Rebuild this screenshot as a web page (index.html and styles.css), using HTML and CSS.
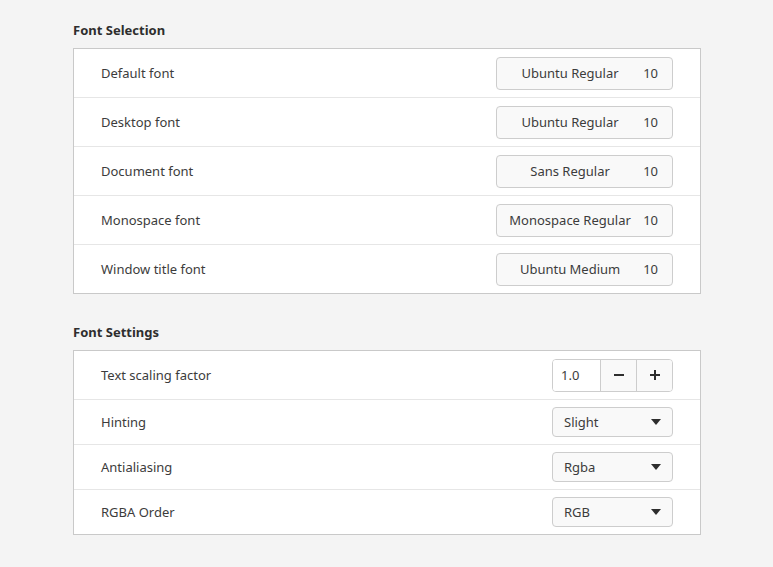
FILE: index.html
```html
<!DOCTYPE html>
<html>
<head>
<meta charset="utf-8">
<link rel="stylesheet" href="styles.css">
</head>
<body>
<main class="page">
  <section class="section">
    <h2 class="title">Font Selection</h2>
    <div class="list">
      <div class="row">
        <span class="label">Default font</span>
        <button class="fontbtn"><span class="fname">Ubuntu Regular</span><span class="fsize">10</span></button>
      </div>
      <div class="row">
        <span class="label">Desktop font</span>
        <button class="fontbtn"><span class="fname">Ubuntu Regular</span><span class="fsize">10</span></button>
      </div>
      <div class="row">
        <span class="label">Document font</span>
        <button class="fontbtn"><span class="fname">Sans Regular</span><span class="fsize">10</span></button>
      </div>
      <div class="row">
        <span class="label">Monospace font</span>
        <button class="fontbtn"><span class="fname">Monospace Regular</span><span class="fsize">10</span></button>
      </div>
      <div class="row">
        <span class="label">Window title font</span>
        <button class="fontbtn"><span class="fname">Ubuntu Medium</span><span class="fsize">10</span></button>
      </div>
    </div>
  </section>
  <section class="section second">
    <h2 class="title">Font Settings</h2>
    <div class="list">
      <div class="row">
        <span class="label">Text scaling factor</span>
        <div class="spin">
          <span class="spin-value">1.0</span>
          <button class="spin-btn"><svg width="12" height="12" viewBox="0 0 12 12"><rect x="1" y="5" width="10" height="2" fill="#2e2e2e"/></svg></button>
          <button class="spin-btn"><svg width="12" height="12" viewBox="0 0 12 12"><rect x="1" y="5" width="10" height="2" fill="#2e2e2e"/><rect x="5" y="1" width="2" height="10" fill="#2e2e2e"/></svg></button>
        </div>
      </div>
      <div class="row short">
        <span class="label">Hinting</span>
        <button class="combo"><span>Slight</span><svg width="10" height="6" viewBox="0 0 10 6"><path d="M0 0h10L5 6z" fill="#2e2e2e"/></svg></button>
      </div>
      <div class="row short">
        <span class="label">Antialiasing</span>
        <button class="combo"><span>Rgba</span><svg width="10" height="6" viewBox="0 0 10 6"><path d="M0 0h10L5 6z" fill="#2e2e2e"/></svg></button>
      </div>
      <div class="row short">
        <span class="label">RGBA Order</span>
        <button class="combo"><span>RGB</span><svg width="10" height="6" viewBox="0 0 10 6"><path d="M0 0h10L5 6z" fill="#2e2e2e"/></svg></button>
      </div>
    </div>
  </section>
</main>
</body>
</html>
```
FILE: styles.css
```css
html, body {
  margin: 0;
  padding: 0;
  background: #f4f4f4;
}
body {
  font-family: "Noto Sans", "Open Sans", sans-serif;
  font-size: 13px;
  color: #3c3c3c;
}
.page {
  width: 628px;
  padding: 22px 0 0 73px;
}
.section.second {
  margin-top: 30px;
}
.title {
  margin: 0 0 9px 0;
  font-size: 13px;
  font-weight: 700;
  color: #2e2e2e;
  line-height: 17px;
}
.list {
  background: #fff;
  border: 1px solid #c9c9c9;
}
.row {
  display: flex;
  align-items: center;
  justify-content: space-between;
  height: 48px;
  padding: 0 27px;
  border-top: 1px solid #e6e6e6;
}
.row:first-child {
  border-top: none;
}
.row.short {
  height: 44px;
}
.label {
  color: #3c3c3c;
  white-space: nowrap;
}
button {
  font: inherit;
  color: #3c3c3c;
  margin: 0;
}
.fontbtn {
  display: flex;
  align-items: center;
  width: 177px;
  height: 33px;
  padding: 0 14px 0 10px;
  background: #f9f9f9;
  border: 1px solid #cdcdcd;
  border-radius: 4px;
  white-space: nowrap;
}
.fname {
  flex: 1;
  text-align: center;
  white-space: nowrap;
}
.fsize {
  margin-left: 10px;
}
.spin {
  display: flex;
  width: 121px;
  height: 33px;
  border: 1px solid #cdcdcd;
  border-radius: 4px;
  overflow: hidden;
  box-sizing: border-box;
}
.spin-value {
  width: 47px;
  display: flex;
  align-items: center;
  padding-left: 8px;
  box-sizing: border-box;
  background: #fff;
}
.spin-btn {
  flex: 1;
  display: flex;
  align-items: center;
  justify-content: center;
  background: #f9f9f9;
  border: none;
  border-left: 1px solid #cdcdcd;
  padding: 0;
}
.combo {
  display: flex;
  align-items: center;
  justify-content: space-between;
  width: 121px;
  height: 30px;
  padding: 0 11px 0 11px;
  background: #f9f9f9;
  border: 1px solid #cdcdcd;
  border-radius: 4px;
}
```
